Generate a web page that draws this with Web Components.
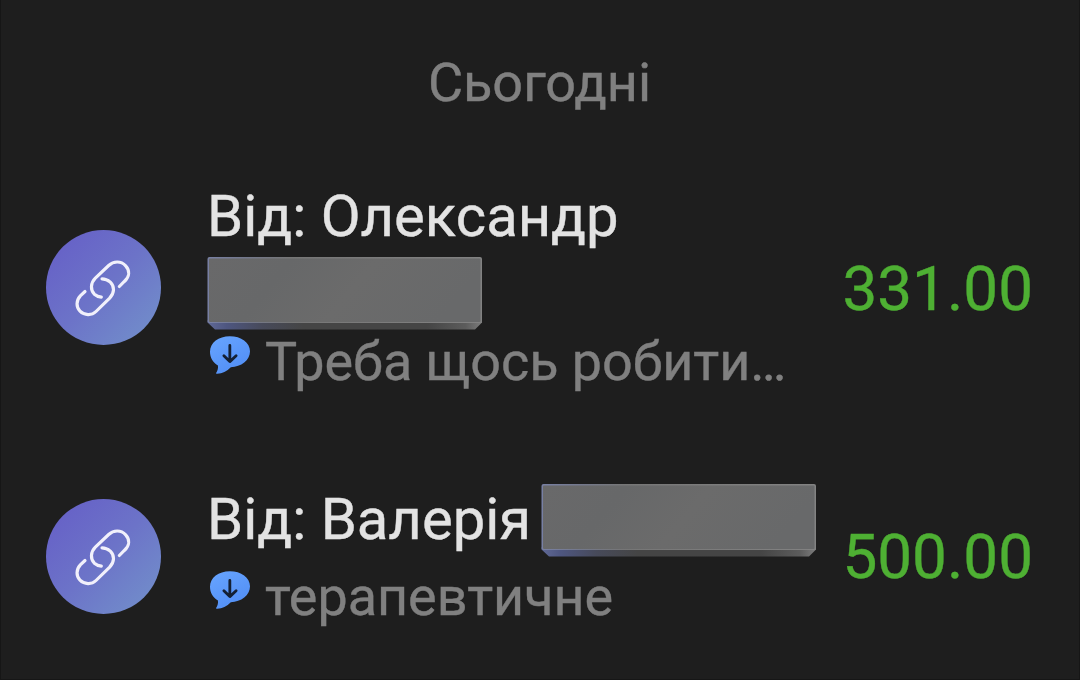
<!DOCTYPE html>
<html lang="uk">
<head>
<meta charset="utf-8">
<title>Сьогодні</title>
<style>
  body {
    background: #1e1e1e;
    font-family: Roboto, "Noto Sans", sans-serif;
    margin: 0;
    overflow: hidden;
    -webkit-text-stroke: 0.4px currentColor;
  }
</style>
</head>
<body>
<history-day label="Сьогодні">
  <history-row amount="331.00">
    <span slot="title">Від: Олександр</span>
    <masked-text slot="below"></masked-text>
    <row-comment slot="comment">Треба щось робити…</row-comment>
  </history-row>
  <history-row class="compact" amount="500.00">
    <span slot="title">Від: Валерія</span>
    <masked-text slot="beside"></masked-text>
    <row-comment slot="comment">терапевтичне</row-comment>
  </history-row>
</history-day>

<script>
class HistoryDay extends HTMLElement {
  connectedCallback() {
    if (this.shadowRoot) return
    const root = this.attachShadow({ mode: "open" })
    root.innerHTML = `
      <style>
        :host {
          border: 1px solid #161616;
          border-block-start: 0;
          box-sizing: border-box;
          display: flex;
          flex-direction: column;
          block-size: 680px;
          inline-size: 1080px;
          padding: 51px 46px 0 45px;
        }
        h2 {
          color: #808080;
          font-size: 54px;
          font-weight: 400;
          line-height: 63px;
          margin: 0 0 68px;
          text-align: center;
        }
        .rows { display: flex; flex-direction: column; gap: 91px; }
      </style>
      <h2></h2>
      <div class="rows"><slot></slot></div>
    `
    root.querySelector("h2").textContent = this.getAttribute("label")
  }
}

class HistoryRow extends HTMLElement {
  connectedCallback() {
    if (this.shadowRoot) return
    const root = this.attachShadow({ mode: "open" })
    root.innerHTML = `
      <style>
        :host {
          align-items: center;
          display: grid;
          grid-template-columns: 115px 1fr auto;
          column-gap: 46px;
        }
        .body { display: flex; flex-direction: column; min-inline-size: 0; }
        .title {
          align-items: flex-start;
          color: #e3e3e3;
          display: flex;
          font-size: 58px;
          gap: 10px;
          line-height: 68px;
          white-space: nowrap;
        }
        :host(.compact) .title { line-height: 71px; }
        ::slotted([slot="below"]) { margin-block-start: 7px; }
        ::slotted([slot="comment"]) { margin-block-start: 1px; }
        :host(.compact) ::slotted([slot="comment"]) { margin-block-start: 9px; }
        .amount {
          color: #4eb033;
          font-size: 62px;
          line-height: 73px;
          padding-block-start: 1px;
        }
      </style>
      <link-badge></link-badge>
      <div class="body">
        <div class="title"><slot name="title"></slot><slot name="beside"></slot></div>
        <slot name="below"></slot>
        <slot name="comment"></slot>
      </div>
      <div class="amount"></div>
    `
    root.querySelector(".amount").textContent = this.getAttribute("amount")
  }
}

class LinkBadge extends HTMLElement {
  connectedCallback() {
    if (this.shadowRoot) return
    this.attachShadow({ mode: "open" }).innerHTML = `
      <style>
        :host {
          background: linear-gradient(135deg, #6763c7 14%, #6c73c8 50%, #718bca 88%);
          border-radius: 50%;
          block-size: 115px;
          display: block;
          inline-size: 115px;
        }
        svg { display: block; }
      </style>
      <svg width="115" height="115" viewBox="49 44.5 345 345" fill="none" stroke="#f1f0fb" stroke-width="9.5" stroke-linecap="round">
        <path d="M269 214 L284 199 C300 184 301 166 288 152 C274 137 252 137 237 151 L197 189 C182 204 182 225 194 237 C200 242 206 245 215 246"/>
        <path d="M166 229 L152 242 C139 256 139 276 151 288 C164 301 186 302 199 289 L240 249 C255 233 255 214 242 201 C235 195 227 191 217 191"/>
      </svg>
    `
  }
}

// Grey bevelled slab that covers a surname
class MaskedText extends HTMLElement {
  connectedCallback() {
    if (this.shadowRoot) return
    this.attachShadow({ mode: "open" }).innerHTML = `
      <style>
        :host { display: block; flex: none; block-size: 73px; inline-size: 275px; }
        svg { display: block; }
      </style>
      <svg width="276" height="73" viewBox="0 0.5 276 73">
        <defs>
          <linearGradient id="face" x1="0" y1="0" x2="1" y2="0.2">
            <stop offset="0" stop-color="#69696a"/>
            <stop offset="0.3" stop-color="#676869"/>
            <stop offset="0.6" stop-color="#6b6b6b"/>
            <stop offset="1" stop-color="#68696a"/>
          </linearGradient>
          <linearGradient id="edge" x1="0" y1="0" x2="1" y2="0">
            <stop offset="0" stop-color="#7880a4"/>
            <stop offset="0.14" stop-color="#73788c"/>
            <stop offset="0.3" stop-color="#767676"/>
            <stop offset="1" stop-color="#828282"/>
          </linearGradient>
          <linearGradient id="base" x1="0" y1="0" x2="1" y2="0">
            <stop offset="0" stop-color="#606996"/>
            <stop offset="0.07" stop-color="#4e5680"/>
            <stop offset="0.2" stop-color="#474a5a"/>
            <stop offset="0.35" stop-color="#454545"/>
            <stop offset="0.8" stop-color="#454545"/>
            <stop offset="0.94" stop-color="#5c5c5c"/>
            <stop offset="1" stop-color="#7c7c7c"/>
          </linearGradient>
        </defs>
        <path d="M0.5 64 H275 V66 L268 73 H8 L0.5 66 Z" fill="url(#base)"/>
        <rect x="0.5" y="0.5" width="274.5" height="66" rx="2" fill="url(#edge)"/>
        <rect x="2" y="2" width="271.5" height="63.5" rx="1" fill="url(#face)"/>
      </svg>
    `
  }
}

class RowComment extends HTMLElement {
  connectedCallback() {
    if (this.shadowRoot) return
    this.attachShadow({ mode: "open" }).innerHTML = `
      <style>
        :host {
          align-items: flex-start;
          color: #808080;
          display: flex;
          font-size: 53.9px;
          gap: 15px;
          line-height: 62px;
          padding-inline-start: 3px;
          white-space: nowrap;
        }
        svg { flex: none; margin-block-start: 5px; }
      </style>
      <svg width="40" height="38" viewBox="45 33 121 114">
        <defs>
          <linearGradient id="bubble" x1="0" y1="0" x2="0.6" y2="1">
            <stop offset="0" stop-color="#68a5ff"/>
            <stop offset="1" stop-color="#528ff5"/>
          </linearGradient>
        </defs>
        <path d="M105 33 C139 33 166 52 166 79 C166 107 139 126 108 127 C96 140 82 145 67 147 C63 147 62 144 65 142 C68 137 70 131 69 122 C53 112 45 97 45 80 C45 52 71 33 105 33 Z" fill="url(#bubble)"/>
        <path d="M105 61 V108 M87 92 L105 110 L124 92" fill="none" stroke="#142033" stroke-width="8.5" stroke-linecap="round" stroke-linejoin="round"/>
      </svg>
      <span><slot></slot></span>
    `
  }
}

customElements.define("link-badge", LinkBadge)
customElements.define("masked-text", MaskedText)
customElements.define("row-comment", RowComment)
customElements.define("history-row", HistoryRow)
customElements.define("history-day", HistoryDay)
</script>
</body>
</html>
